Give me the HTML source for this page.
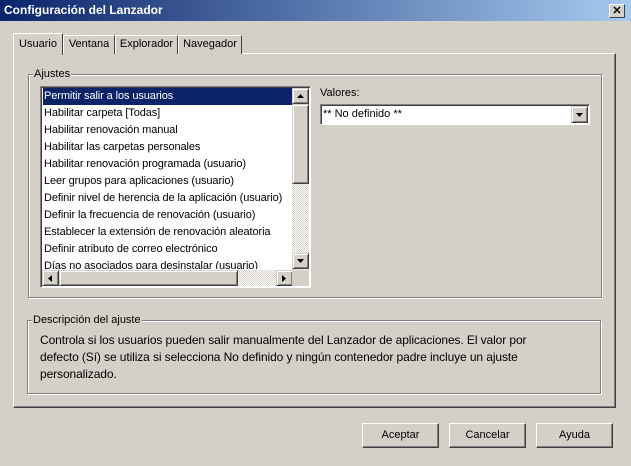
<!DOCTYPE html><html><head><style>
*{margin:0;padding:0;box-sizing:border-box}
body{width:631px;height:466px;background:#d4d0c8;font-family:"Liberation Sans",sans-serif;font-size:11px;color:#000;position:relative;overflow:hidden}
.a{position:absolute}
.title{left:0;top:0;width:631px;height:21px;background:linear-gradient(90deg,#0a246a,#a6caf0);color:#fff;font-weight:bold;font-size:12px;line-height:21px;padding-left:4px}
.close{left:609px;top:4px;width:16px;height:14px;background:#d4d0c8;border:1px solid;border-color:#fff #404040 #404040 #fff;font-size:11px;line-height:12px;text-align:center;color:#000;font-weight:bold}
.tab{top:35px;height:19px;border:1px solid;border-color:#fff #404040 transparent #fff;border-bottom:none;line-height:17px;text-align:center;font-size:11px;background:#d4d0c8}
.panel{left:13px;top:53px;width:603px;height:355px;border:1px solid;border-color:#fff #404040 #404040 #fff;box-shadow:inset -1px -1px 0 #808080}
.grp{border:1px solid #808080;box-shadow:1px 1px 0 #fff, inset 1px 1px 0 #fff}
.lbl{background:#d4d0c8;padding:0 1px;line-height:12px}
.list{left:40px;top:86px;width:271px;height:202px;background:#fff;border:1px solid;border-color:#808080 #fff #fff #808080;box-shadow:inset 1px 1px 0 #404040}
.row{position:absolute;left:2px;width:250px;height:17px;line-height:17px;padding-left:1px;white-space:nowrap;overflow:hidden;letter-spacing:-0.1px}
.sb{background:#d4d0c8;border:1px solid;border-color:#d4d0c8 #404040 #404040 #d4d0c8;box-shadow:inset 1px 1px 0 #fff,inset -1px -1px 0 #808080}
.trk{background:repeating-conic-gradient(#fff 0 25%,#d4d0c8 0 50%) 0 0/2px 2px}
.btn{top:423px;width:77px;height:25px;border:1px solid;border-color:#fff #404040 #404040 #fff;box-shadow:inset -1px -1px 0 #808080;text-align:center;line-height:23px}
svg{position:absolute}
</style></head><body>
<div class="a title">Configuración del Lanzador</div>
<div class="a close">✕</div>
<div class="a panel"></div>
<div class="a tab" style="left:63px;width:52px">Ventana</div>
<div class="a tab" style="left:115px;width:63px">Explorador</div>
<div class="a tab" style="left:178px;width:64px">Navegador</div>
<div class="a tab" style="left:13px;top:33px;width:50px;height:22px;line-height:21px;border-right-color:#404040">Usuario</div>

<div class="a grp" style="left:28px;top:74px;width:574px;height:224px"></div>
<div class="a lbl" style="left:33px;top:68px">Ajustes</div>

<div class="a list">
<div class="row" style="top:1px;background:#0a246a;color:#fff;width:250px">Permitir salir a los usuarios</div>
<div class="row" style="top:18px">Habilitar carpeta [Todas]</div>
<div class="row" style="top:35px">Habilitar renovación manual</div>
<div class="row" style="top:52px">Habilitar las carpetas personales</div>
<div class="row" style="top:69px">Habilitar renovación programada (usuario)</div>
<div class="row" style="top:86px">Leer grupos para aplicaciones (usuario)</div>
<div class="row" style="top:103px">Definir nivel de herencia de la aplicación (usuario)</div>
<div class="row" style="top:120px">Definir la frecuencia de renovación (usuario)</div>
<div class="row" style="top:137px">Establecer la extensión de renovación aleatoria</div>
<div class="row" style="top:154px">Definir atributo de correo electrónico</div>
<div class="row" style="top:171px;height:11px;line-height:17px">Días no asociados para desinstalar (usuario)</div>
<div class="a trk" style="left:251px;top:1px;width:17px;height:182px"></div>
<div class="a sb" style="left:251px;top:1px;width:17px;height:16px"></div>
<div class="a sb" style="left:251px;top:17px;width:17px;height:80px"></div>
<div class="a sb" style="left:251px;top:166px;width:17px;height:16px"></div>
<div class="a trk" style="left:1px;top:183px;width:250px;height:16px"></div>
<div class="a sb" style="left:1px;top:183px;width:17px;height:16px"></div>
<div class="a sb" style="left:18px;top:183px;width:179px;height:16px"></div>
<div class="a sb" style="left:235px;top:183px;width:17px;height:16px"></div>
<div class="a" style="left:251px;top:183px;width:17px;height:16px;background:#d4d0c8"></div>
<svg style="left:256px;top:7px" width="7" height="4"><path d="M3.5 0L7 4H0z"/></svg>
<svg style="left:256px;top:172px" width="7" height="4"><path d="M0 0H7L3.5 4z"/></svg>
<svg style="left:7px;top:188px" width="4" height="7"><path d="M4 0V7L0 3.5z"/></svg>
<svg style="left:241px;top:188px" width="4" height="7"><path d="M0 0V7L4 3.5z"/></svg>
</div>

<div class="a" style="left:320px;top:87px">Valores:</div>
<div class="a" style="left:320px;top:104px;width:270px;height:21px;background:#fff;border:1px solid;border-color:#808080 #fff #fff #808080;box-shadow:inset 1px 1px 0 #404040;line-height:19px;padding-left:2px">** No definido **</div>
<div class="a sb" style="left:571px;top:106px;width:17px;height:17px"></div>
<svg style="left:576px;top:113px" width="7" height="4"><path d="M0 0H7L3.5 4z"/></svg>

<div class="a grp" style="left:27px;top:320px;width:574px;height:74px"></div>
<div class="a lbl" style="left:32px;top:314px">Descripción del ajuste</div>
<div class="a" style="left:40px;top:332px;width:515px;font-size:12px;line-height:17px;letter-spacing:-0.1px">Controla si los usuarios pueden salir manualmente del Lanzador de aplicaciones. El valor por defecto (Sí) se utiliza si selecciona No definido y ningún contenedor padre incluye un ajuste personalizado.</div>

<div class="a btn" style="left:362px">Aceptar</div>
<div class="a btn" style="left:449px">Cancelar</div>
<div class="a btn" style="left:536px">Ayuda</div>
</body></html>
